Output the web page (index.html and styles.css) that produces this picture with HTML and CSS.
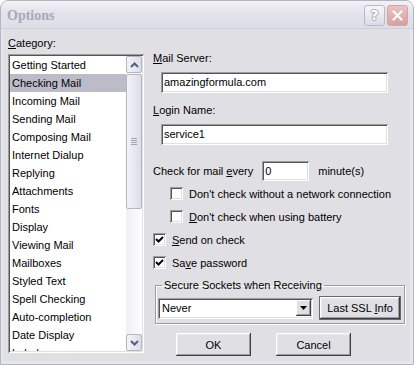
FILE: index.html
```html
<!DOCTYPE html>
<html lang="en">
<head>
    <meta charset="UTF-8">
    <title>Options</title>
    <link rel="stylesheet" href="styles.css">
</head>
<body>
    <div class="window">
        <!-- Title bar (inactive) -->
        <div class="titlebar">
            <span class="title">Options</span>
            <div class="caption-buttons">
                <div class="cap-btn help">?</div>
                <div class="cap-btn close">
                    <svg width="11" height="11" viewBox="0 0 11 11">
                        <path d="M1.5 1.5 L9.5 9.5 M9.5 1.5 L1.5 9.5" stroke="#fff" stroke-width="2" stroke-linecap="square"/>
                    </svg>
                </div>
            </div>
        </div>

        <div class="client">
            <div class="left-col">
                <div class="label"><u>C</u>ategory:</div>
                <div class="listbox">
                    <div class="list-items" id="categoryList"></div>
                    <div class="scrollbar">
                        <div class="sb-btn">
                            <svg width="9" height="6" viewBox="0 0 9 6"><path d="M1 5 L4.5 1.5 L8 5" fill="none" stroke="#4d6185" stroke-width="2"/></svg>
                        </div>
                        <div class="sb-thumb">
                            <div class="grip"></div>
                            <div class="grip"></div>
                            <div class="grip"></div>
                            <div class="grip"></div>
                        </div>
                        <div class="sb-track"></div>
                        <div class="sb-btn">
                            <svg width="9" height="6" viewBox="0 0 9 6"><path d="M1 1 L4.5 4.5 L8 1" fill="none" stroke="#4d6185" stroke-width="2"/></svg>
                        </div>
                    </div>
                </div>
            </div>

            <div class="right-col">
                <div class="label"><u>M</u>ail Server:</div>
                <div class="field wide">amazingformula.com</div>

                <div class="label gap-top"><u>L</u>ogin Name:</div>
                <div class="field wide">service1</div>

                <div class="check-row">
                    <span>Check for mail <u>e</u>very</span>
                    <div class="field small">0</div>
                    <span>minute(s)</span>
                </div>

                <div class="checkbox indent first">
                    <span class="box"></span>
                    <span>Don't check without a network connection</span>
                </div>
                <div class="checkbox indent">
                    <span class="box"></span>
                    <span><u>D</u>on't check when using battery</span>
                </div>
                <div class="checkbox">
                    <span class="box checked">
                        <svg width="9" height="9" viewBox="0 0 9 9"><path d="M1 4 L3.5 6.5 L8 2" fill="none" stroke="#000" stroke-width="2"/></svg>
                    </span>
                    <span><u>S</u>end on check</span>
                </div>
                <div class="checkbox">
                    <span class="box checked">
                        <svg width="9" height="9" viewBox="0 0 9 9"><path d="M1 4 L3.5 6.5 L8 2" fill="none" stroke="#000" stroke-width="2"/></svg>
                    </span>
                    <span>Sa<u>v</u>e password</span>
                </div>

                <fieldset class="group">
                    <legend>Secure Sockets when Receiving</legend>
                    <div class="group-row">
                        <div class="combo">
                            <span class="combo-text">Never</span>
                            <div class="combo-btn">
                                <svg width="7" height="4" viewBox="0 0 7 4"><path d="M0 0 H7 L3.5 4 Z" fill="#000"/></svg>
                            </div>
                        </div>
                        <div class="button focused"><span>Last SSL <u>I</u>nfo</span></div>
                    </div>
                </fieldset>

                <div class="dialog-buttons">
                    <div class="button">OK</div>
                    <div class="button">Cancel</div>
                </div>
            </div>
        </div>
    </div>

    <script>
        const categories = [
            'Getting Started', 'Checking Mail', 'Incoming Mail', 'Sending Mail',
            'Composing Mail', 'Internet Dialup', 'Replying', 'Attachments',
            'Fonts', 'Display', 'Viewing Mail', 'Mailboxes', 'Styled Text',
            'Spell Checking', 'Auto-completion', 'Date Display', 'Labels'
        ];

        const list = document.getElementById('categoryList');
        categories.forEach((name, i) => {
            const item = document.createElement('div');
            item.className = 'list-item' + (i === 1 ? ' selected' : '');
            item.textContent = name;
            list.appendChild(item);
        });
    </script>
</body>
</html>
```

FILE: styles.css
```css
body {
    margin: 0;
    padding: 0;
    font-family: "Liberation Sans", Arial, sans-serif;
    font-size: 11px;
    color: #000;
    background-color: #fff;
}

u {
    text-decoration: underline;
    text-underline-offset: 1px;
}

.window {
    width: 414px;
    height: 365px;
    box-sizing: border-box;
    border: 1px solid #b4b4c2;
    border-radius: 8px 8px 0 0;
    background-color: #e6e6ec;
    display: flex;
    flex-direction: column;
    overflow: hidden;
}

.titlebar {
    height: 27px;
    flex-shrink: 0;
    display: flex;
    align-items: center;
    justify-content: space-between;
    padding: 0 5px 0 6px;
    background: linear-gradient(#f2f2f6, #e4e4ec 40%, #dedee8);
    border-bottom: 1px solid #d0d0da;
}

.title {
    font-family: "Liberation Serif", "DejaVu Serif", serif;
    font-weight: bold;
    font-size: 14px;
    color: #a9a8b8;
    margin-top: 2px;
}

.caption-buttons {
    display: flex;
    gap: 2px;
    margin-top: 1px;
}

.cap-btn {
    width: 21px;
    height: 21px;
    box-sizing: border-box;
    border-radius: 3px;
    display: flex;
    align-items: center;
    justify-content: center;
}

.cap-btn.help {
    border: 1px solid #b9b9c9;
    background: linear-gradient(#f6f6fa, #dcdce6);
    font-family: "DejaVu Sans", sans-serif;
    font-weight: bold;
    font-size: 14px;
    color: #fff;
    text-shadow: 1px 0 #a8a8b8, -1px 0 #a8a8b8, 0 1px #a8a8b8, 0 -1px #a8a8b8;
}

.cap-btn.close {
    border: 1px solid #d2a6a6;
    background: linear-gradient(#eac4c4, #d6a0a0);
}

.client {
    flex: 1;
    display: flex;
    gap: 9px;
    margin: 0 3px 3px 2px;
    padding: 8px 5px 0 5px;
    background-color: #e0dfe3;
}

.left-col {
    width: 136px;
    display: flex;
    flex-direction: column;
}

.label {
    height: 13px;
    line-height: 13px;
    margin-bottom: 4px;
}

.listbox {
    height: 299px;
    box-sizing: border-box;
    padding: 2px;
    background-color: #fff;
    box-shadow: inset 1px 1px #9d9da1, inset -1px -1px #fff, inset 2px 2px #555, inset -2px -2px #e0dfe3;
    display: flex;
    overflow: hidden;
}

.list-items {
    flex: 1;
    overflow: hidden;
}

.list-item {
    height: 18px;
    line-height: 18px;
    padding-left: 2px;
    white-space: nowrap;
}

.list-item.selected {
    background-color: #bcbcc9;
}

.scrollbar {
    width: 16px;
    display: flex;
    flex-direction: column;
    background: linear-gradient(90deg, #f0f0f4, #fdfdfd);
}

.sb-btn,
.sb-thumb {
    box-sizing: border-box;
    border: 1px solid #b4b6c4;
    border-radius: 2px;
    background: linear-gradient(90deg, #f2f2f7, #dcdde8);
    display: flex;
    align-items: center;
    justify-content: center;
}

.sb-btn {
    height: 17px;
}

.sb-thumb {
    height: 135px;
    margin-top: 1px;
    flex-direction: column;
    gap: 1px;
}

.grip {
    width: 6px;
    height: 1px;
    background-color: #a3a5b5;
}

.sb-track {
    flex: 1;
}

.right-col {
    flex: 1;
    display: flex;
    flex-direction: column;
    padding-top: 15px;
}

.field {
    box-sizing: border-box;
    height: 21px;
    line-height: 19px;
    padding: 1px 3px;
    background-color: #fff;
    box-shadow: inset 1px 1px #9d9da1, inset -1px -1px #fff, inset 2px 2px #555, inset -2px -2px #e0dfe3;
    white-space: nowrap;
}

.field.wide {
    width: 227px;
    margin-left: 8px;
    margin-top: 3px;
}

.gap-top {
    margin-top: 11px;
    margin-bottom: 4px;
}

.check-row {
    display: flex;
    align-items: center;
    margin-top: 16px;
    height: 20px;
}

.field.small {
    width: 47px;
    height: 20px;
    margin-left: 9px;
    margin-right: 9px;
}

.checkbox {
    display: flex;
    align-items: center;
    gap: 6px;
    height: 13px;
    margin-top: 10px;
}

.checkbox.first {
    margin-top: 6px;
}

.checkbox.indent {
    padding-left: 17px;
}

.box {
    width: 13px;
    height: 13px;
    box-sizing: border-box;
    background-color: #fff;
    box-shadow: inset 1px 1px #9d9da1, inset -1px -1px #fff, inset 2px 2px #555, inset -2px -2px #e0dfe3;
    display: flex;
    align-items: center;
    justify-content: center;
    flex-shrink: 0;
}

.group {
    margin: 10px 0 0 2px;
    padding: 4px 3px 3px 2px;
    width: 248px;
    box-sizing: border-box;
    border: 1px solid #9d9da1;
    box-shadow: 1px 1px #fff, inset 1px 1px #fff;
}

.group legend {
    padding: 0 2px;
    margin-left: 4px;
    line-height: 13px;
}

.group-row {
    display: flex;
    align-items: center;
    gap: 6px;
}

.combo {
    width: 155px;
    height: 21px;
    box-sizing: border-box;
    padding: 2px;
    background-color: #fff;
    box-shadow: inset 1px 1px #9d9da1, inset -1px -1px #fff, inset 2px 2px #555, inset -2px -2px #e0dfe3;
    display: flex;
    align-items: center;
}

.combo-text {
    flex: 1;
    padding-left: 2px;
}

.combo-btn {
    width: 15px;
    height: 16px;
    background-color: #e0dfe3;
    box-shadow: inset -1px -1px #404040, inset 1px 1px #fff, inset -2px -2px #9d9da1;
    display: flex;
    align-items: center;
    justify-content: center;
}

.button {
    box-sizing: border-box;
    height: 23px;
    display: flex;
    align-items: center;
    justify-content: center;
    background-color: #e0dfe3;
    box-shadow: inset -1px -1px #404040, inset 1px 1px #fff, inset -2px -2px #9d9da1, inset 2px 2px #ececf0;
}

.button.focused {
    width: 82px;
    height: 24px;
    border: 1px solid #6a6a6e;
}

.dialog-buttons {
    display: flex;
    gap: 25px;
    margin-top: 9px;
    padding-left: 23px;
}

.dialog-buttons .button {
    width: 75px;
}
```
